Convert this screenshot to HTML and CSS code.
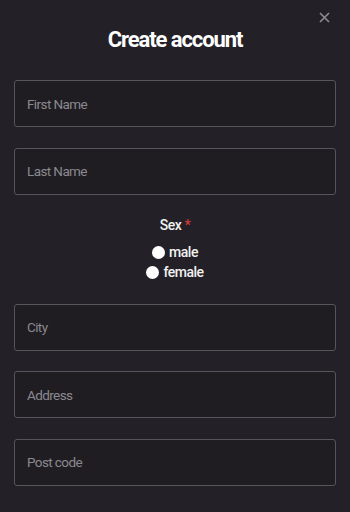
FILE: index.html
```html
<!DOCTYPE html>
<html>
<head>
<meta charset="utf-8">
<link rel="stylesheet" href="styles.css">
</head>
<body>
<div class="modal">
  <button class="close" aria-label="Close">
    <svg width="11" height="11" viewBox="0 0 11 11"><path d="M1 1L10 10M10 1L1 10" stroke="#8d8b92" stroke-width="1.6" fill="none"/></svg>
  </button>
  <h1 class="title">Create account</h1>
  <form class="form">
    <input class="field" type="text" placeholder="First Name">
    <input class="field" type="text" placeholder="Last Name">
    <div class="sex">
      <div class="sex-label">Sex <span class="req">*</span></div>
      <label class="radio"><input type="radio" name="sex"><span>male</span></label>
      <label class="radio"><input type="radio" name="sex"><span>female</span></label>
    </div>
    <input class="field" type="text" placeholder="City">
    <input class="field" type="text" placeholder="Address">
    <input class="field" type="text" placeholder="Post code">
  </form>
</div>
</body>
</html>
```
FILE: styles.css
```css
* { box-sizing: border-box; }
html, body { margin: 0; padding: 0; }
body {
  background: #232127;
  font-family: Roboto, "Liberation Sans", sans-serif;
  color: #f2f2f2;
  width: 350px;
  height: 512px;
  overflow: hidden;
}
.modal {
  position: relative;
  padding: 26px 14px 0;
}
.close {
  position: absolute;
  top: 12px;
  right: 20px;
  width: 11px;
  height: 11px;
  padding: 0;
  border: 0;
  background: none;
  line-height: 0;
}
.title {
  margin: 0;
  text-align: center;
  font-size: 22px;
  line-height: 28px;
  font-weight: 700;
  letter-spacing: -1.1px;
  color: #ffffff;
}
.form {
  display: flex;
  flex-direction: column;
  gap: 20.5px;
  margin-top: 26px;
}
.field {
  display: block;
  width: 322px;
  height: 47px;
  background: #1f1d22;
  border: 1.5px solid #57555c;
  border-radius: 3px;
  padding: 0 12px;
  font-family: Roboto, "Liberation Sans", sans-serif;
  font-size: 13.5px;
  letter-spacing: -0.6px;
  color: #e0e0e0;
  outline: none;
}
.field::placeholder { color: #8b8990; }
.sex {
  display: flex;
  flex-direction: column;
  align-items: center;
  margin-bottom: 1px;
}
.sex-label {
  font-size: 14px;
  line-height: 20px;
  font-weight: 500;
  letter-spacing: -0.4px;
  color: #f0f0f0;
  margin-bottom: 7px;
}
.req { color: #d13b3b; }
.radio {
  display: flex;
  align-items: center;
  gap: 4px;
  font-size: 14px;
  line-height: 20px;
  font-weight: 500;
  letter-spacing: -0.5px;
  color: #f2f2f2;
}
.radio input {
  appearance: none;
  -webkit-appearance: none;
  width: 13px;
  height: 13px;
  margin: 0;
  border-radius: 50%;
  background: #ffffff;
  border: 0;
}
```
